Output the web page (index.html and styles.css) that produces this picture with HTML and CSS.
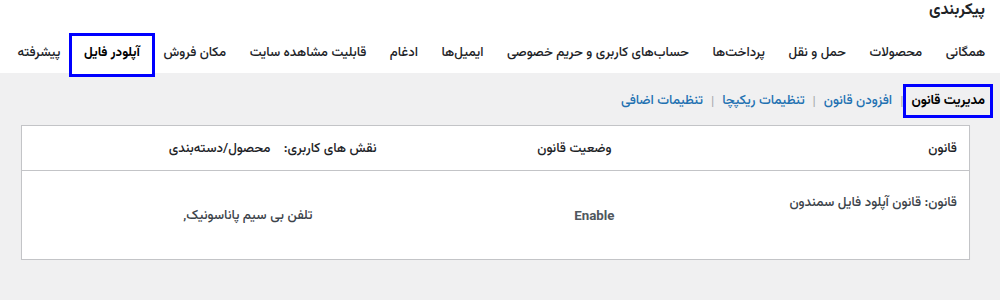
FILE: index.html
```html
<!DOCTYPE html>
<html lang="fa" dir="rtl">
<head>
<meta charset="utf-8">
<title>پیکربندی</title>
<link rel="stylesheet" href="styles.css">
</head>
<body>
<header class="top">
  <h1 class="title">پیکربندی</h1>
  <nav class="tabs">
    <a class="tab" href="#">همگانی</a>
    <a class="tab" href="#">محصولات</a>
    <a class="tab" href="#">حمل و نقل</a>
    <a class="tab" href="#">پرداخت‌ها</a>
    <a class="tab" href="#">حساب‌های کاربری و حریم خصوصی</a>
    <a class="tab" href="#">ایمیل‌ها</a>
    <a class="tab" href="#">ادغام</a>
    <a class="tab" href="#">قابلیت مشاهده سایت</a>
    <a class="tab" href="#">مکان فروش</a>
    <a class="tab active" href="#">آپلودر فایل</a>
    <a class="tab" href="#">پیشرفته</a>
  </nav>
</header>
<main class="content">
  <ul class="subnav">
    <li><a class="current" href="#">مدیریت قانون</a></li>
    <li class="sep">|</li>
    <li><a href="#">افزودن قانون</a></li>
    <li class="sep">|</li>
    <li><a href="#">تنظیمات ریکپچا</a></li>
    <li class="sep">|</li>
    <li><a href="#">تنظیمات اضافی</a></li>
  </ul>
  <div class="wrap">
    <table class="rules">
      <colgroup>
        <col class="c1"><col class="c2"><col class="c3"><col class="c4">
      </colgroup>
      <thead>
        <tr class="head-row">
          <th>قانون</th>
          <th>وضعیت قانون</th>
          <th>نقش های کاربری:</th>
          <th>محصول/دسته‌بندی</th>
        </tr>
      </thead>
      <tbody>
        <tr class="body-row">
          <td class="name">قانون: قانون آپلود فایل سمندون</td>
          <td class="status">Enable</td>
          <td class="products" colspan="2">تلفن بی سیم پاناسونیک,</td>
        </tr>
      </tbody>
    </table>
  </div>
</main>
</body>
</html>
```

FILE: styles.css
```css
html, body {
  margin: 0;
  padding: 0;
}
body {
  background: #f0f0f1;
  color: #3c434a;
  font-family: "Vazirmatn", "Noto Sans Arabic", "DejaVu Sans", sans-serif;
  font-size: 13.3px;
  direction: rtl;
}
.top {
  background: #fff;
  height: 73px;
  padding: 0 15px;
  box-sizing: border-box;
}
.title {
  margin: 0;
  font-size: 16px;
  font-weight: 700;
  line-height: 22px;
  color: #1d2327;
}
.tabs {
  display: flex;
  margin: 14px -12px 0 0;
}
.tab {
  display: block;
  padding: 0 11.75px;
  line-height: 34px;
  height: 38px;
  font-size: 13.2px;
  font-weight: 500;
  color: #1d2327;
  text-decoration: none;
  white-space: nowrap;
}
.tab.active {
  font-weight: 700;
  color: #000;
  background: #fff;
  outline: 3px solid #0000ff;
}
.subnav {
  list-style: none;
  margin: 0;
  padding: 14px 10px 0 0;
  display: flex;
  align-items: center;
  height: 28px;
}
.subnav li {
  display: block;
}
.subnav a {
  display: block;
  padding: 0 5px;
  line-height: 28px;
  font-weight: 500;
  color: #2271b1;
  text-decoration: none;
  white-space: nowrap;
}
.subnav a.current {
  color: #000;
  font-weight: 700;
  outline: 3px solid #0000ff;
}
.sep {
  color: #a7aaad;
  padding: 0 3px;
}
.wrap {
  margin: 1px 15px 0 8px;
  padding: 9px 15px 0 14px;
}
.rules {
  width: 100%;
  border-collapse: collapse;
  background: #fff;
  border: 1px solid #c3c4c7;
  box-shadow: 0 1px 1px rgba(0, 0, 0, 0.04);
  table-layout: fixed;
}
.c1 { width: 346px; }
.c2 { width: 235px; }
.c3 { width: 106px; }
.c4 { width: 261px; }
.head-row { height: 45px; }
.body-row { height: 89px; }
.rules th {
  padding: 0 12px;
  text-align: right;
  font-weight: 500;
  color: #1d2327;
  border-bottom: 1px solid #c3c4c7;
  white-space: nowrap;
}
.rules td {
  padding: 0 12px;
  text-align: right;
  vertical-align: middle;
  color: #3c434a;
  font-weight: 500;
}
.rules td.name {
  vertical-align: top;
  padding-top: 21px;
}
.rules td.status {
  font-family: Roboto, "DejaVu Sans", sans-serif;
  font-weight: 700;
  color: #50575e;
  padding-right: 9px;
}
.rules td.products {
  padding-right: 76px;
}
```
